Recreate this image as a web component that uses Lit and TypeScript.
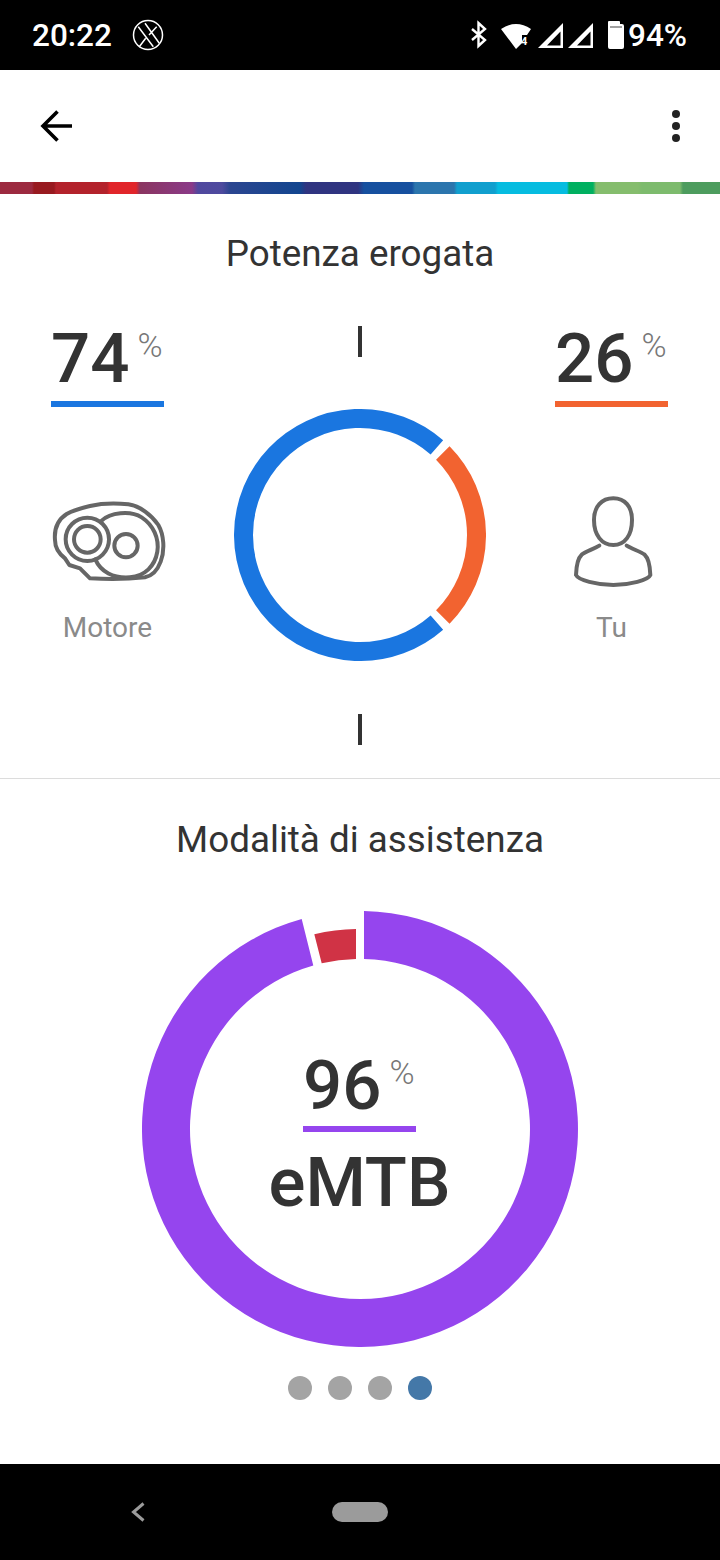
import { LitElement, html, css, svg } from "lit";
import { customElement } from "lit/decorators.js";

@customElement("app-root")
export class AppRoot extends LitElement {
  static styles = css`
    :host { display: block; width: 720px; height: 1560px; font-family: Roboto, "Liberation Sans", sans-serif; background: #fff; color: #333; overflow: hidden; }
    .page { display: flex; flex-direction: column; height: 1560px; }
    .status { height: 70px; background: #000; color: #fff; display: flex; align-items: center; padding: 0 33px 0 32px; justify-content: space-between; flex: none; }
    .status-left, .status-right { display: flex; align-items: center; }
    .time { font-size: 31.5px; font-weight: 500; line-height: 70px; margin-top: 2px; }
    .xlogo { margin-left: 20px; display: block; }
    .batt-text { font-size: 31.5px; font-weight: 500; line-height: 70px; margin-left: 2px; margin-top: 2px; }
    .status svg { display: block; }
    .toolbar { height: 112px; flex: none; display: flex; align-items: center; justify-content: space-between; padding: 0 38px; }
    .toolbar svg { display: block; }
    .strip { height: 12px; flex: none; background: linear-gradient(90deg,
      #9c2a40 0, #9c2a40 32px, #981a20 34px, #981a20 54px, #b3222b 56px, #b3222b 107px, #e1252a 110px, #e1252a 136px,
      #8a3560 140px, #8a3a88 192px, #50489e 198px, #4e4a9e 222px, #2b4590 230px, #12458f 300px, #2f3480 306px, #2f3480 358px,
      #16509f 364px, #16509f 412px, #2b75ad 415px, #2b75ad 454px, #119fce 457px, #119fce 495px, #06bce0 498px, #06bce0 567px,
      #00b060 569px, #00b060 593px, #85bd6d 596px, #85bd6d 638px, #7dbb6d 642px, #7dbb6d 680px, #4d9c5e 683px, #4d9c5e 720px); }
    .power { height: 544px; flex: none; border-bottom: 1px solid #dcdcdc; padding-top: 40px; }
    .title { font-size: 36.8px; line-height: 40px; text-align: center; color: #333; font-weight: 400; }
    .power-row { margin-top: 52px; padding: 0 52px 0 51px; display: grid; grid-template-columns: 113px 1fr 113px; }
    .side { display: flex; flex-direction: column; align-items: center; }
    .pct { width: 113px; border-bottom: 6px solid; padding-bottom: 13px; display: flex; }
    .pct.motor { border-color: #1a76e0; }
    .pct.you { border-color: #f26330; }
    .pct.assist { border-color: #9545ee; padding-bottom: 11px; }
    .num { font-size: 69px; font-weight: 500; line-height: 62px; color: #333; position: relative; top: 2px; }
    .unit { font-size: 34px; font-weight: 300; line-height: 38px; color: #777; margin-left: 8px; }
    .side svg { display: block; margin-top: 88px; overflow: visible; }
    .label { margin-top: 25px; font-size: 28px; line-height: 34px; color: #8a8a8a; }
    .center { display: flex; flex-direction: column; align-items: center; }
    .tick { width: 4px; height: 31px; background: #333; flex: none; }
    .ring { display: block; margin: 52px 0 53px; }
    .assistance { flex: 1; display: flex; flex-direction: column; align-items: center; padding-top: 41px; }
    .stack { margin-top: 51px; display: grid; justify-items: center; width: 436px; height: 436px; }
    .stack > * { grid-area: 1 / 1; }
    .inner { display: flex; flex-direction: column; align-items: center; margin: 142px 1px 0 0; }
    .mode-name { font-size: 69px; font-weight: 500; line-height: 60px; color: #333; margin-top: 21px; }
    .dots { margin-top: 29px; display: flex; gap: 16px; }
    .dot { width: 24px; height: 24px; border-radius: 50%; background: #a4a4a4; }
    .dot.on { background: #4478a8; }
    .nav { height: 96px; flex: none; background: #000; display: grid; grid-template-columns: 332px 56px; align-items: center; }
    .nav svg { display: block; margin-left: 130px; }
    .pill { width: 56px; height: 20px; border-radius: 10px; background: #9b9b9b; }
  `;

  private pct(n: number, cls: string) {
    return html`<div class="pct ${cls}"><span class="num">${n}</span><span class="unit">%</span></div>`;
  }

  render() {
    return html`<div class="page">
      <div class="status">
        <div class="status-left">
          <span class="time">20:22</span>
          <svg class="xlogo" width="32" height="32" viewBox="0 0 32 32" fill="none" stroke="#fff" stroke-width="1.5">
            <circle cx="16" cy="16" r="14.5"></circle>
            <path d="M6.3 7.7 L21.3 27.7 M13 4.3 L27.3 24.3 M24.7 7.7 L17 16 M13.7 19.3 L7.3 27.7"></path>
          </svg>
        </div>
        <div class="status-right">
          <svg width="155" height="30" viewBox="0 0 155 30">
            <path d="M1 9 L14 20 L7.5 26 V3 L14 9 L1 20" fill="none" stroke="#fff" stroke-width="2.4"></path>
            <path d="M30 9 Q45 -1 60 9 L56 15 H51 V23 L45 29 Z" fill="#fff"></path>
            <text x="50" y="25" font-size="11" font-weight="700" fill="#fff" font-family="Roboto, sans-serif">4</text>
            <path fill-rule="evenodd" d="M67 28 L92 3 V28 Z M76 25.5 H89.5 V11.5 Z" fill="#fff"></path>
            <path fill-rule="evenodd" d="M97 28 L122 3 V28 Z M106 25.5 H119.5 V11.5 Z" fill="#fff"></path>
            <path d="M137 5 V3 Q137 2 138 2 H148 Q149 2 149 3 V5 H151 Q153 5 153 7 V28 Q153 30 151 30 H139 Q137 30 137 28 Z" transform="translate(0,-1)" fill="#fff"></path>
            <rect x="139" y="6.5" width="12" height="1" fill="#444"></rect>
          </svg>
          <span class="batt-text">94%</span>
        </div>
      </div>
      <div class="toolbar">
        <svg width="36" height="36" viewBox="0 0 36 36" fill="none" stroke="#000" stroke-width="3.6">
          <path d="M34 18 H5 M19.5 3.5 L5 18 L19.5 32.5"></path>
        </svg>
        <svg width="12" height="36" viewBox="0 0 12 36" fill="#222">
          <circle cx="6" cy="6" r="4"></circle><circle cx="6" cy="18" r="4"></circle><circle cx="6" cy="30" r="4"></circle>
        </svg>
      </div>
      <div class="strip"></div>
      <div class="power">
        <div class="title">Potenza erogata</div>
        <div class="power-row">
          <div class="side">
            ${this.pct(74, "motor")}
            <svg width="113" height="91" viewBox="63 45 339 273" fill="none" stroke="#666" stroke-width="12" stroke-linejoin="round" stroke-linecap="round">
              <path d="M180 78 C215 70 265 70 295 73 C330 78 365 105 385 135 C402 165 405 210 392 245 C382 272 365 288 345 292 C290 298 230 298 180 295 L150 265 L118 255 L105 235 C88 222 75 205 75 180 C72 145 85 118 110 102 C130 90 155 84 180 78 Z"></path>
              <path d="M215 122 C240 98 300 90 335 112 C370 135 388 175 382 215 C375 258 345 288 300 292 C250 296 212 275 196 238"></path>
              <circle cx="172" cy="178" r="65"></circle>
              <circle cx="172" cy="178" r="40"></circle>
              <circle cx="288" cy="197" r="35"></circle>
            </svg>
            <div class="label">Motore</div>
          </div>
          <div class="center">
            <div class="tick"></div>
            <svg class="ring" width="252" height="252" viewBox="-126 -126 252 252" fill="none" stroke-width="19">
              ${svg`<path stroke="#1a76e0" d="${this.arc(116.5, 138.7, 401.3)}"></path>
              <path stroke="#f26330" d="${this.arc(116.5, 45.3, 134.7)}"></path>`}
            </svg>
            <div class="tick"></div>
          </div>
          <div class="side">
            ${this.pct(26, "you")}
            <svg width="113" height="91" viewBox="15 45 339 273" fill="none" stroke="#666" stroke-width="12" stroke-linecap="round">
              <path d="M190 55 C225 55 246 80 246 120 C246 165 225 195 190 195 C155 195 132 165 132 120 C132 80 155 55 190 55 Z"></path>
              <path d="M148 197 C130 208 108 214 95 224 C82 236 79 255 78 285 C85 300 140 315 190 315 C240 315 295 300 301 285 C300 255 297 236 284 224 C271 214 248 208 230 197"></path>
            </svg>
            <div class="label">Tu</div>
          </div>
        </div>
      </div>
      <div class="assistance">
        <div class="title">Modalità di assistenza</div>
        <div class="stack">
          <svg width="436" height="436" viewBox="142 911 436 436">
            <path fill="#9545ee" d="M364 911.04 A218 218 0 1 1 301.7 918.94 L313.3 965.54 A170 170 0 1 0 364 959.05 Z"></path>
            <path fill="#d03345" d="M356 929.04 A200 200 0 0 0 314.3 934.3 L321.7 963.37 A170 170 0 0 1 356 959.05 Z"></path>
          </svg>
          <div class="inner">
            ${this.pct(96, "assist")}
            <div class="mode-name">eMTB</div>
          </div>
        </div>
        <div class="dots">
          <div class="dot"></div><div class="dot"></div><div class="dot"></div><div class="dot on"></div>
        </div>
      </div>
      <div class="nav">
        <svg width="16" height="20" viewBox="0 0 16 20" fill="none" stroke="#9b9b9b" stroke-width="3"><path d="M13.5 1.5 L3.5 10 L13.5 18.5"></path></svg>
        <div class="pill"></div>
      </div>
    </div>`;
  }

  private arc(r: number, a: number, b: number) {
    const p = (d: number) => {
      const t = (d * Math.PI) / 180;
      return `${(r * Math.sin(t)).toFixed(2)} ${(-r * Math.cos(t)).toFixed(2)}`;
    };
    return `M${p(a)} A${r} ${r} 0 ${b - a > 180 ? 1 : 0} 1 ${p(b)}`;
  }
}
